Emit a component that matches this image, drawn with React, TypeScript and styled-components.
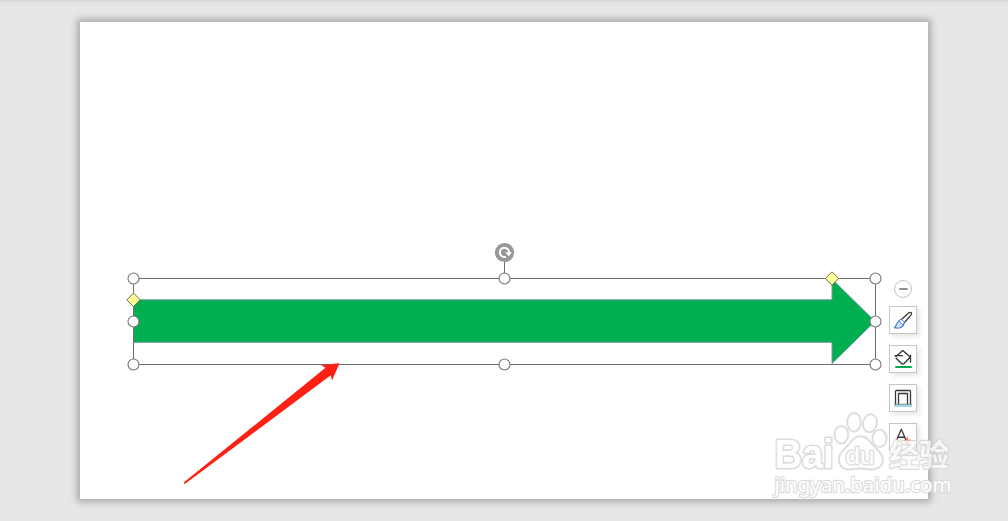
import React from 'react';
import styled, { createGlobalStyle } from 'styled-components';

const GlobalStyle = createGlobalStyle`
  * { box-sizing: border-box; }
  body { margin: 0; background: #e7e7e7; overflow: hidden; }
`;

const Workspace = styled.main`
  position: relative;
  display: flex;
  width: 1008px;
  height: 521px;
  padding: 22px 80px;
  background: linear-gradient(#d2d2d2 0, #e1e1e1 2px, #e7e7e7 5px);
  font-family: 'Liberation Sans', sans-serif;
  overflow: hidden;
`;

const Slide = styled.section`
  position: relative;
  width: 848px;
  height: 477px;
  background: #fff;
  box-shadow: 0 0 7px 3px rgba(0, 0, 0, 0.27);
`;

const Drawing = styled.svg`
  position: absolute;
  inset: 0;
  display: block;
  overflow: visible;
`;

const QuickTools = styled.aside`
  position: absolute;
  left: 809px;
  top: 258px;
  width: 28px;
  display: flex;
  flex-direction: column;
  align-items: center;
  gap: 11px;
`;

const Collapse = styled.button`
  display: grid;
  place-items: center;
  width: 18px;
  height: 18px;
  margin-bottom: -3px;
  padding: 0;
  border: 1px solid #c3c3c3;
  border-radius: 50%;
  background: #fff;

  &::before {
    content: '';
    width: 9px;
    height: 2px;
    border-radius: 1px;
    background: #8d8d8d;
  }
`;

const ToolButton = styled.button`
  display: grid;
  place-items: center;
  width: 28px;
  height: 28px;
  padding: 0;
  border: 1px solid #c6c6c6;
  background: #fff;
  box-shadow: 3px 3px 4px rgba(0, 0, 0, 0.09);
`;

const Icon = styled.svg`
  display: block;
  width: 26px;
  height: 26px;
  fill: none;
  stroke-linecap: round;
  stroke-linejoin: round;
`;

const Watermark = styled.svg`
  position: absolute;
  left: 768px;
  top: 406px;
  width: 190px;
  height: 94px;
  pointer-events: none;
`;

const handles = [
  [133.5, 278.5], [504.5, 278.5], [875.5, 278.5],
  [133.5, 321.5], [875.5, 321.5],
  [133.5, 364.5], [504.5, 364.5], [875.5, 364.5],
];

const SelectedArrow = () => (
  <Drawing width="848" height="477" viewBox="80 22 848 477">
    <path d="M133.5 299.8H832V279L875 321.3L832 363.5V342.3H133.5Z" fill="#00af50" stroke="#71969b" />
    <path d="M504.5 262V278M133.5 278.5H875.5V364.5H133.5Z" fill="none" stroke="#707070" />
    <g fill="#ffff99" stroke="#6c6c50">
      <path d="M133.5 293.1L140.2 299.8L133.5 306.5L126.8 299.8Z" />
      <path d="M832 271.8L838.7 278.5L832 285.2L825.3 278.5Z" />
    </g>
    {handles.map(([x, y]) => (
      <circle key={`${x}-${y}`} cx={x} cy={y} r="5.5" fill="#fff" stroke="#747474" strokeWidth="1.1" />
    ))}
    <circle cx="504.5" cy="252.5" r="9.6" fill="#989898" />
    <path d="M505.8 256.7A4.6 4.6 0 1 1 509 252.8" fill="none" stroke="#fff" strokeWidth="2" />
    <path d="M505.3 252.3H512L508.7 256.2Z" fill="#fff" />
    <path d="M183.7 482.6L325.5 367.8L321 365L339.5 363.3L332 380.5L330.8 375.3L184.8 484Z" fill="#ff2014" />
  </Drawing>
);

const BrushIcon = () => (
  <Icon viewBox="0 0 26 26">
    <path d="M10.3 13.5L18.8 5.8C20.3 4.6 22.4 5.8 21.3 7.6L14 16" fill="#fff" stroke="#353535" strokeWidth="1.25" />
    <path d="M4.3 20.7C6.8 19.2 6 15 10 13.3L14 16.3C13.8 20.5 8.5 21.8 4.3 20.7Z" fill="#d9e7fa" stroke="#477fd8" strokeWidth="1.2" />
    <path d="M9.3 14L12.3 17.6L14.7 15.4L11.3 12.4Z" fill="#fff" stroke="#477fd8" />
  </Icon>
);

const FillIcon = () => (
  <Icon viewBox="0 0 26 26">
    <path d="M6 10.5L12.8 4.6L20.3 11L13.8 17.8H11.8L6.2 12.2M5 9.7H12.5M20.5 9.5V16" stroke="#303030" strokeWidth="1.3" />
    <path d="M6 21H21" stroke="#00ab4e" strokeWidth="2" />
  </Icon>
);

const OutlineIcon = () => (
  <Icon viewBox="0 0 26 26">
    <path d="M4 20.5H22" stroke="#a9d7df" strokeWidth="3" strokeLinecap="butt" />
    <path d="M5.5 18.8V6.2L6.2 5.5H19.8L20.5 6.2V18.8M8.5 18.8V8.5H17.5V18.8" stroke="#373737" strokeWidth="1.3" />
    <path d="M4.5 19.2H21.5" stroke="#738083" strokeWidth=".8" />
  </Icon>
);

const TextEffectsIcon = () => (
  <Icon viewBox="0 0 26 26">
    <path d="M6 17.5L11.3 5.3L16 16M8 13.2H14.3" stroke="#3b3b3b" strokeWidth="1.35" />
    <path d="M14.2 16L15.5 15V18L17.3 11.5L18 16L20.5 15.2L19 20L16.5 21L14.2 18Z" fill="#ff6330" />
  </Icon>
);

const BaiduWatermark = () => (
  <Watermark viewBox="768 406 190 94">
    <g fill="#fff" fillOpacity=".4" stroke="#dedede" strokeWidth="2">
      <ellipse cx="841.3" cy="434.7" rx="6.9" ry="8.8" />
      <ellipse cx="854" cy="422.3" rx="6.8" ry="9.3" />
      <ellipse cx="870" cy="423.2" rx="7" ry="9" transform="rotate(12 870 423.2)" />
      <ellipse cx="879.5" cy="438.4" rx="7" ry="8.7" />
      <path d="M860.5 436.2C853.5 436.2 851.2 442.3 846.5 447C842.7 450.6 837.8 454.3 839 461.3C840.1 467.8 846 470.1 852.5 469.2C858 468.4 863 468.4 868.6 469.2C875.7 470.4 882.1 467.3 882.8 460.8C883.5 454.5 878.3 451 874.7 447.1C870 442 867.4 436.2 860.5 436.2Z" />
    </g>
    <g fill="#fff" stroke="#dcdcdc" strokeLinejoin="round" paintOrder="stroke">
      <text x="774.5" y="467.5" fontFamily="Liberation Sans, sans-serif" fontSize="40" fontWeight="700" strokeWidth="3.2" textLength="59" lengthAdjust="spacingAndGlyphs">Bai</text>
      <text x="845.5" y="464" fontFamily="Liberation Sans, sans-serif" fontSize="24" stroke="#e0e0e0" strokeWidth="2.8" textLength="29" lengthAdjust="spacingAndGlyphs">du</text>
      <text x="889" y="466" fontFamily="Noto Sans CJK SC, sans-serif" fontSize="31" fontWeight="700" fillOpacity=".8" stroke="#cecece" strokeOpacity=".75" strokeWidth="2.2" textLength="60" lengthAdjust="spacingAndGlyphs">经验</text>
      <text x="774.5" y="491.5" fontFamily="Noto Sans, sans-serif" fontSize="20.5" strokeWidth="2.4" textLength="177" lengthAdjust="spacingAndGlyphs">jingyan.baidu.com</text>
    </g>
  </Watermark>
);

export default function App() {
  return (
    <Workspace>
      <GlobalStyle />
      <Slide>
        <SelectedArrow />
        <QuickTools>
          <Collapse aria-label="Collapse tools" />
          <ToolButton aria-label="Shape style"><BrushIcon /></ToolButton>
          <ToolButton aria-label="Shape fill"><FillIcon /></ToolButton>
          <ToolButton aria-label="Shape outline"><OutlineIcon /></ToolButton>
          <ToolButton aria-label="Text effects"><TextEffectsIcon /></ToolButton>
        </QuickTools>
      </Slide>
      <BaiduWatermark />
    </Workspace>
  );
}
